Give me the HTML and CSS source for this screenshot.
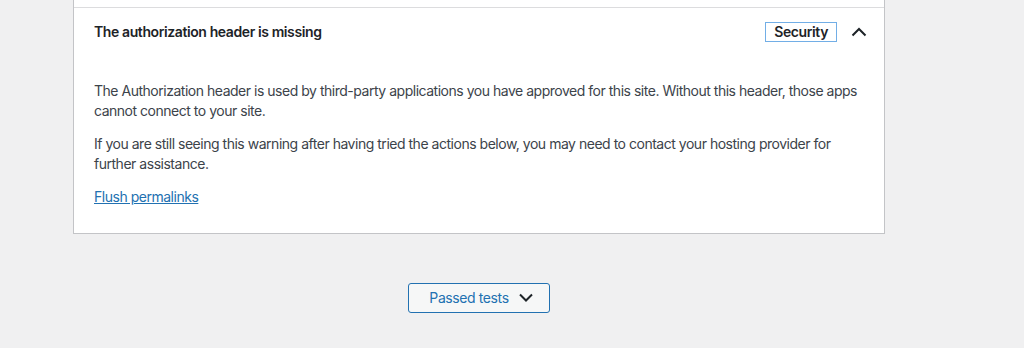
FILE: index.html
```html
<!DOCTYPE html>
<html lang="en">
  <head>
    <meta charset="utf-8">
    <title>Site Health</title>
    <link rel="stylesheet" href="styles.css">
  </head>
  <body>
    <div class="health-wrap">
      <div class="accordion">
        <div class="accordion-prev"></div>
        <div class="accordion-item">
          <div class="accordion-heading">
            <span class="title">The authorization header is missing</span>
            <span class="badge">Security</span>
            <svg class="chevron" width="16" height="10" viewBox="0 0 16 10">
              <polyline points="1.5,8.5 8,2 14.5,8.5" fill="none" stroke="#1d2327" stroke-width="2"/>
            </svg>
          </div>
          <div class="accordion-panel">
            <p>The Authorization header is used by third-party applications you have approved for this site. Without this header, those apps cannot connect to your site.</p>
            <p>If you are still seeing this warning after having tried the actions below, you may need to contact your hosting provider for further assistance.</p>
            <p><a href="#">Flush permalinks</a></p>
          </div>
        </div>
      </div>
      <div class="toggle-row">
        <button class="toggle-btn">
          Passed tests
          <svg width="14" height="9" viewBox="0 0 14 9">
            <polyline points="1,1.5 7,7.5 13,1.5" fill="none" stroke="#1d2327" stroke-width="2"/>
          </svg>
        </button>
      </div>
    </div>
  </body>
</html>
```

FILE: styles.css
```css
* {
  box-sizing: border-box
}

body {
  margin: 0;
  padding: 0;
  background-color: #f0f0f1;
  color: #3c434a;
  font-family: Inter, 'Noto Sans', sans-serif;
  font-size: 14px;
  letter-spacing: -0.4px
}

.health-wrap {
  width: 812px;
  margin-left: 73px
}

.accordion {
  background-color: #fff;
  border: 1px solid #c3c4c7;
  border-top: 0
}

.accordion-prev {
  height: 7px
}

.accordion-item {
  border-top: 1px solid #dcdcde
}

.accordion-heading {
  display: flex;
  align-items: center;
  height: 47px;
  padding: 0 17px 0 20px
}

.accordion-heading .title {
  flex: 1;
  font-weight: 600;
  color: #1d2327
}

.badge {
  border: 1px solid #72aee6;
  height: 20px;
  line-height: 18px;
  padding: 0 8px;
  font-weight: 600;
  color: #1d2327
}

.chevron {
  margin-left: 14px
}

.accordion-panel {
  padding: 12px 20px 12px
}

.accordion-panel p {
  margin: 14px 0;
  line-height: 1.4;
  letter-spacing: -0.48px
}

.accordion-panel a {
  color: #2271b1;
  text-decoration: underline
}

.toggle-row {
  display: flex;
  justify-content: center;
  padding-top: 49px
}

.toggle-btn {
  display: flex;
  align-items: center;
  gap: 10px;
  height: 30px;
  padding: 0 16px 0 20px;
  border: 1px solid #2271b1;
  border-radius: 3px;
  background-color: #f6f7f7;
  color: #2271b1;
  font-family: inherit;
  font-size: 14px;
  letter-spacing: inherit
}
```
